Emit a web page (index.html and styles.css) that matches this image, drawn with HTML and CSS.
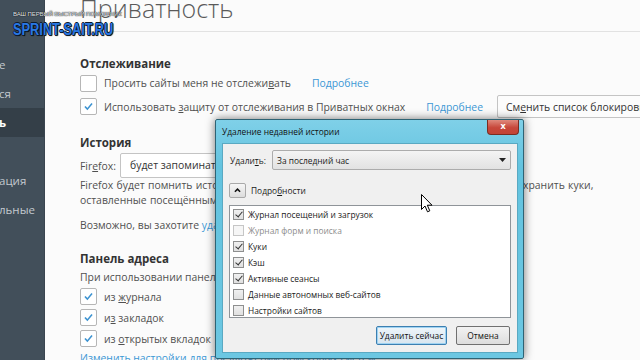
FILE: index.html
```html
<!DOCTYPE html>
<html lang="ru">
<head>
    <meta charset="UTF-8">
    <title>Настройки - Приватность</title>
    <link rel="stylesheet" href="styles.css">
</head>
<body>
    <div class="page">
        <!-- боковое меню -->
        <nav class="sidebar">
            <div class="nav-item">е</div>
            <div class="nav-item">ся</div>
            <div class="nav-item selected">ь</div>
            <div class="nav-item"></div>
            <div class="nav-item">ация</div>
            <div class="nav-item">льные</div>
        </nav>

        <main class="content">
            <header class="page-header">
                <h1>Приватность</h1>
            </header>

            <!-- Отслеживание -->
            <section class="group tracking">
                <h3>Отслеживание</h3>
                <div class="check-row">
                    <span class="checkbox"></span>
                    <span>Просить сайты меня не отслежи<u>в</u>ать</span>
                    <a class="link">Подробнее</a>
                </div>
                <div class="check-row row-tall">
                    <span class="checkbox checked">
                        <svg viewBox="0 0 17 17"><path d="M4.5 8.5 L7.2 11.5 L12.5 5.2"/></svg>
                    </span>
                    <span>Использовать <u>з</u>ащиту от отслеживания в Приватных окнах</span>
                    <a class="link">Подробнее</a>
                    <button class="pref-btn">См<u>е</u>нить список блокировки</button>
                </div>
            </section>

            <!-- История -->
            <section class="group history">
                <h3>История</h3>
                <div class="history-row">
                    <span>Fir<u>e</u>fox:</span>
                    <div class="pref-select">будет запоминать историю</div>
                </div>
                <p class="history-text">Firefox будет помнить историю посещений, загрузок, поиска и данных форм, а также хранить куки, оставленные посещёнными вами веб-сайтами.</p>
                <p class="history-note">Возможно, вы захотите <a class="link-inline">удалить вашу недавнюю историю</a> или отдельные куки.</p>
            </section>

            <!-- Панель адреса -->
            <section class="group urlbar">
                <h3>Панель адреса</h3>
                <p class="urlbar-text">При использовании панели адреса предлагать ссылки</p>
                <div class="check-row small">
                    <span class="checkbox checked">
                        <svg viewBox="0 0 17 17"><path d="M4.5 8.5 L7.2 11.5 L12.5 5.2"/></svg>
                    </span>
                    <span>из <u>ж</u>урнала</span>
                </div>
                <div class="check-row small">
                    <span class="checkbox checked">
                        <svg viewBox="0 0 17 17"><path d="M4.5 8.5 L7.2 11.5 L12.5 5.2"/></svg>
                    </span>
                    <span>и<u>з</u> закладок</span>
                </div>
                <div class="check-row small">
                    <span class="checkbox checked">
                        <svg viewBox="0 0 17 17"><path d="M4.5 8.5 L7.2 11.5 L12.5 5.2"/></svg>
                    </span>
                    <span>из <u>о</u>ткрытых вкладок</span>
                </div>
                <p class="urlbar-link"><a class="link-inline">Изменить настройки для предложений поисковых систем</a></p>
            </section>
        </main>
    </div>

    <!-- водяной знак -->
    <div class="watermark">
        <div class="watermark-sub">ВАШ ПЕРВЫЙ БЫСТРЫЙ ПОМОЩНИК</div>
        <div class="watermark-main">SPRINT-SAIT.RU</div>
    </div>

    <!-- окно удаления истории -->
    <div class="dialog">
        <div class="dialog-titlebar">
            <span class="dialog-title">Удаление недавней истории</span>
            <span class="dialog-close">x</span>
        </div>
        <div class="dialog-body">
            <div class="dlg-row">
                <span class="dlg-label">Удали<u>т</u>ь:</span>
                <div class="dlg-select">
                    <span>За последний час</span>
                    <svg class="dlg-arrow" viewBox="0 0 7 4"><path d="M0 0 H7 L3.5 4 Z"/></svg>
                </div>
            </div>
            <div class="details-row">
                <span class="expander">
                    <svg viewBox="0 0 17 15"><path d="M5.5 9 L8.5 6 L11.5 9"/></svg>
                </span>
                <span>Подро<u>б</u>ности</span>
            </div>
            <div class="dlg-list">
                <div class="dlg-item"><span class="dlg-check on"></span>Журнал посещений и загрузок</div>
                <div class="dlg-item off"><span class="dlg-check"></span>Журнал форм и поиска</div>
                <div class="dlg-item"><span class="dlg-check on"></span>Куки</div>
                <div class="dlg-item"><span class="dlg-check on"></span>Кэш</div>
                <div class="dlg-item"><span class="dlg-check on"></span>Активные сеансы</div>
                <div class="dlg-item"><span class="dlg-check"></span>Данные автономных веб-сайтов</div>
                <div class="dlg-item"><span class="dlg-check"></span>Настройки сайтов</div>
            </div>
            <div class="dlg-buttons">
                <button class="dlg-btn default">Удалить сейчас</button>
                <button class="dlg-btn cancel">Отмена</button>
            </div>
        </div>
    </div>

    <!-- указатель мыши -->
    <svg class="cursor" viewBox="0 0 12 19">
        <path d="M0.5 0.5 L0.5 15.5 L4 12 L6.5 17.8 L8.8 16.8 L6.3 11.2 L11 11.2 Z"/>
    </svg>
</body>
</html>
```

FILE: styles.css
```css
* {
    box-sizing: border-box;
}

body {
    margin: 0;
    background-color: #fbfbfb;
    font-family: 'Open Sans', 'Noto Sans', sans-serif;
    font-size: 10.4px;
    color: #505050;
    overflow: hidden;
}

u {
    text-decoration-thickness: 1px;
}

.page {
    display: flex;
    height: 360px;
}

/* боковое меню */
.sidebar {
    width: 45px;
    flex-shrink: 0;
    background-color: #424f5a;
    border-right: 1px solid #3a454f;
    padding-top: 50px;
    overflow: hidden;
}

.nav-item {
    height: 29px;
    line-height: 29px;
    margin-left: -1px;
    color: #c3c9cf;
    font-size: 11.5px;
    white-space: nowrap;
}

.nav-item.selected {
    background-color: #343f48;
    color: #fff;
    font-weight: bold;
}

/* основная часть */
.content {
    flex: 1;
    padding-left: 35px;
    overflow: hidden;
    white-space: nowrap;
}

.page-header {
    display: flow-root;
    height: 32px;
    border-bottom: 1px solid #e2e2e2;
}

.page-header h1 {
    margin: -9px 0 0 0;
    font-size: 25px;
    font-weight: 300;
    line-height: 34px;
    color: #5a5a5a;
}

.group h3 {
    margin: 0;
    font-size: 11.5px;
    line-height: 16px;
    font-weight: bold;
    color: #333;
}

.tracking {
    margin-top: 24px;
}

.check-row {
    display: flex;
    align-items: center;
    height: 22px;
}

.check-row.row-tall {
    height: 23px;
    margin-top: 1px;
}

.check-row.small {
    height: 21px;
}

.checkbox {
    width: 17px;
    height: 17px;
    flex-shrink: 0;
    margin-right: 7px;
    border: 1px solid #b6b6b6;
    border-radius: 2px;
    background-color: #fff;
}

.checkbox svg {
    display: block;
    width: 15px;
    height: 15px;
    fill: none;
    stroke: #3d93d1;
    stroke-width: 1.8;
}

.link {
    margin-left: 21px;
    color: #3c98d5;
}

.link-inline {
    color: #3c98d5;
}

.pref-btn {
    height: 23px;
    margin-left: 14px;
    padding: 0 8px;
    border: 1px solid #c4c4c4;
    border-radius: 2px;
    background-color: #fcfcfc;
    font-family: inherit;
    font-size: 10.4px;
    color: #333;
}

.history {
    margin-top: 17px;
}

.history-row {
    display: flex;
    align-items: center;
    margin-top: 2px;
}

.pref-select {
    width: 300px;
    height: 25px;
    margin-left: 4px;
    padding-left: 9px;
    line-height: 23px;
    border: 1px solid #c4c4c4;
    border-radius: 2px;
    background-color: #fff;
    color: #333;
}

.history-text {
    width: 530px;
    margin: 0;
    white-space: normal;
    word-spacing: 0.6px;
    line-height: 15px;
}

.history-note {
    margin: 10px 0 0;
    line-height: 15px;
}

.urlbar {
    margin-top: 18px;
}

.urlbar-text {
    margin: 3px 0 1px;
    line-height: 15px;
}

.urlbar-link {
    margin: 2px 0 0;
    line-height: 15px;
}

/* водяной знак */
.watermark {
    position: absolute;
    left: 13px;
    top: 10px;
}

.watermark-sub {
    font-family: 'Liberation Sans', sans-serif;
    font-size: 6px;
    line-height: 8px;
    color: #e8eef5;
    text-shadow: 0 0 1px #000, 0 0 1px #000;
    letter-spacing: -0.1px;
}

.watermark-main {
    margin-top: 4px;
    font-family: 'Liberation Sans', sans-serif;
    font-size: 16px;
    font-weight: bold;
    line-height: 16px;
    color: #2a78e4;
    transform: scaleX(0.8);
    transform-origin: left;
    text-shadow: 1px 0 0 #0d1b2e, -1px 0 0 #0d1b2e, 0 1px 0 #0d1b2e, 0 -1px 0 #0d1b2e, 1px 1px 1px #000;
}

/* диалог */
.dialog {
    position: absolute;
    left: 215px;
    top: 119px;
    width: 309px;
    height: 240px;
    padding: 0 5px 5px 6px;
    border: 1px solid #2e6374;
    border-radius: 2px;
    background: linear-gradient(#7fd0e8, #63c3df 20%, #6cc7e2);
    box-shadow: 0 0 10px rgba(0, 0, 0, 0.55);
    font-size: 8.4px;
    color: #1a1a1a;
}

.dialog-titlebar {
    display: flex;
    justify-content: space-between;
    height: 23px;
}

.dialog-title {
    line-height: 23px;
    color: #111;
}

.dialog-close {
    width: 32px;
    height: 15px;
    margin-right: -1px;
    border: 1px solid #7a2d22;
    border-top: none;
    border-radius: 0 0 4px 4px;
    background: linear-gradient(#df8a7d, #c7473a 55%, #c24436);
    color: #fff;
    font-weight: bold;
    font-size: 9px;
    line-height: 12px;
    text-align: center;
}

.dialog-body {
    height: 210px;
    padding: 6px 6px 0;
    background-color: #f0f0f0;
    border: 1px solid #5aa9c2;
}

.dlg-row {
    display: flex;
    align-items: center;
}

.dlg-label {
    width: 43px;
    padding-left: 1px;
}

.dlg-select {
    flex: 1;
    height: 20px;
    display: flex;
    align-items: center;
    justify-content: space-between;
    padding: 0 4px;
    border: 1px solid #acacac;
    border-radius: 2px;
    background: linear-gradient(#f4f4f4, #e2e2e2);
}

.dlg-arrow {
    width: 7px;
    height: 4px;
    fill: #222;
}

.details-row {
    display: flex;
    align-items: center;
    margin-top: 13px;
    height: 15px;
}

.expander {
    width: 17px;
    height: 15px;
    margin-right: 5px;
    border: 1px solid #a9a9a9;
    border-radius: 2px;
    background: linear-gradient(#f6f6f6, #dcdcdc);
}

.expander svg {
    display: block;
    width: 15px;
    height: 13px;
    fill: none;
    stroke: #111;
    stroke-width: 1.8;
}

.dlg-list {
    height: 113px;
    margin-top: 7px;
    border: 1px solid #8f9499;
    background-color: #fff;
}

.dlg-item {
    display: flex;
    align-items: center;
    height: 16px;
    padding-left: 3px;
}

.dlg-item.off {
    color: #8c8c8c;
}

.dlg-check {
    width: 11px;
    height: 11px;
    margin-right: 4px;
    border: 1px solid #8e8f8f;
    background: linear-gradient(#f0f0f0, #e0e0e0);
    position: relative;
}

.dlg-item.off .dlg-check {
    border-color: #c6c6c6;
    background: #f6f6f6;
}

.dlg-check.on::after {
    content: '';
    position: absolute;
    left: 3px;
    top: 0;
    width: 3px;
    height: 6px;
    border: solid #333;
    border-width: 0 1.5px 1.5px 0;
    transform: rotate(40deg);
}

.dlg-buttons {
    display: flex;
    justify-content: flex-end;
    gap: 9px;
    margin-top: 8px;
    padding-right: 1px;
}

.dlg-btn {
    height: 19px;
    padding: 0;
    border: 1px solid #707070;
    border-radius: 2px;
    background: linear-gradient(#f2f2f2, #dddddd);
    font-family: inherit;
    font-size: 8.4px;
    color: #111;
}

.dlg-btn.default {
    width: 71px;
    border-color: #3c7fb1;
    box-shadow: inset 0 0 0 1px #9fd3f2;
    background: linear-gradient(#eef5fa, #d8e5ef);
}

.dlg-btn.cancel {
    width: 54px;
}

/* указатель */
.cursor {
    position: absolute;
    left: 421px;
    top: 194px;
    width: 12px;
    height: 19px;
    fill: #fff;
    stroke: #000;
    stroke-width: 1;
}
```
